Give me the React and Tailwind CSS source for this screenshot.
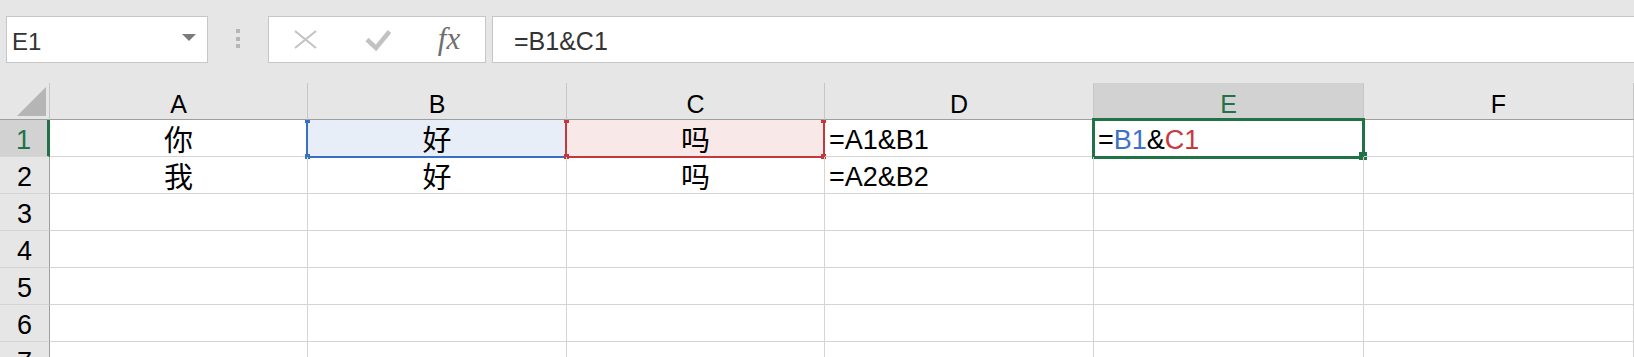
import React from 'react'

const GRID = 'grid grid-cols-[50px_258px_259px_258px_269px_270px_270px]'

const COLUMNS = ['A', 'B', 'C', 'D', 'E', 'F']

const ROWS = [
  ['我', '好', '吗', '=A2&B2', '', ''],
  ['', '', '', '', '', ''],
  ['', '', '', '', '', ''],
  ['', '', '', '', '', ''],
  ['', '', '', '', '', ''],
  ['', '', '', '', '', '']
]

function ColHead({ label, active }) {
  return (
    <div
      className={`h-[37px] flex items-end justify-center border-r border-b border-r-[#c6c6c6] border-b-[#9e9e9e] ${
        active ? 'bg-[#d2d2d2] text-[#217346]' : 'bg-[#e6e6e6] text-black'
      }`}
    >
      <span className="text-[25px] leading-[1.15]">{label}</span>
    </div>
  )
}

function RowHead({ n, active }) {
  return (
    <div
      className={`h-[37px] flex items-end justify-center border-b border-b-[#d4d4d4] ${
        active
          ? 'bg-[#d2d2d2] text-[#217346] border-r-[3px] border-r-[#217346]'
          : 'bg-[#e6e6e6] text-black border-r border-r-[#9e9e9e]'
      }`}
    >
      <span className="text-[27px] leading-[1.15]">{n}</span>
    </div>
  )
}

function Cell({ children, cjk, className = '', overlay }) {
  return (
    <div
      className={`relative h-[37px] flex items-end border-r border-b border-[#d4d4d4] ${
        cjk ? 'justify-center' : 'pl-[4px]'
      } ${className}`}
    >
      {children && (
        <span className={cjk ? 'text-[29px] leading-none' : 'text-[27px] leading-[1.15] whitespace-nowrap'}>
          {children}
        </span>
      )}
      {overlay}
    </div>
  )
}

const isCjk = (s) => /[\u4e00-\u9fff]/.test(s)

export default function App() {
  // range highlight for B1 (blue) and C1 (red)
  const blueRange = (
    <>
      <div className="absolute left-[-2px] top-0 bottom-[-2px] w-[2px] bg-[#3a6fc6]" />
      <div className="absolute left-[-2px] right-0 bottom-[-2px] h-[2px] bg-[#3a6fc6]" />
      <div className="absolute left-[-3px] top-0 w-[5px] h-[3px] bg-[#3a6fc6]" />
      <div className="absolute left-[-3px] bottom-[-3px] w-[5px] h-[5px] bg-[#3a6fc6]" />
    </>
  )

  const redRange = (
    <>
      <div className="absolute left-[-2px] top-0 bottom-[-2px] w-[2px] bg-[#c4383d]" />
      <div className="absolute right-[-1px] top-0 bottom-[-2px] w-[2px] bg-[#c4383d]" />
      <div className="absolute left-[-2px] right-[-1px] bottom-[-2px] h-[2px] bg-[#c4383d]" />
      <div className="absolute left-[-3px] top-0 w-[5px] h-[3px] bg-[#c4383d]" />
      <div className="absolute right-[-2px] top-0 w-[5px] h-[3px] bg-[#c4383d]" />
      <div className="absolute left-[-3px] bottom-[-3px] w-[5px] h-[5px] bg-[#c4383d]" />
      <div className="absolute right-[-2px] bottom-[-3px] w-[5px] h-[5px] bg-[#c4383d]" />
    </>
  )

  const activeCell = (
    <>
      <div className="absolute left-[-2px] top-[-2px] right-[-2px] bottom-[-3px] border-[3px] border-[#217346]" />
      <div className="absolute right-[-4px] bottom-[-4px] w-[8px] h-[8px] bg-[#217346]" />
    </>
  )

  return (
    <div className="w-[1634px] h-[357px] overflow-hidden bg-white font-['Liberation_Sans','Noto_Sans_CJK_SC',sans-serif]">

      {/* Name box + formula bar */}
      <div className="h-[83px] bg-[#e6e6e6] pt-[16px] flex items-start">
        <div className="ml-[6px] w-[202px] h-[47px] bg-white border border-[#c6c6c6] flex items-center justify-between pl-[5px] pr-[11px]">
          <span className="pt-[4px] text-[24px] leading-[1.15] text-[#333]">E1</span>
          <svg width="14" height="7" viewBox="0 0 14 7" className="mb-[4px]">
            <polygon points="0,0 14,0 7,7" fill="#7b7b7b" />
          </svg>
        </div>

        <div className="ml-[28px] mt-[13px] flex flex-col gap-[3.5px]">
          <span className="w-[4px] h-[4px] bg-[#b6b6b6]" />
          <span className="w-[4px] h-[4px] bg-[#b6b6b6]" />
          <span className="w-[4px] h-[4px] bg-[#b6b6b6]" />
        </div>

        <div className="ml-[28px] w-[218px] h-[47px] bg-white border border-[#c6c6c6] grid grid-cols-3 items-center justify-items-center">
          <svg width="23" height="19" viewBox="0 0 23 19">
            <path d="M1 1 L22 18 M22 1 L1 18" stroke="#c4c4c4" strokeWidth="2.2" fill="none" />
          </svg>
          <svg width="26" height="22" viewBox="0 0 26 22" className="ml-[2px]">
            <path d="M2 10.5 L11 19 L24.5 2.5" stroke="#c2c2c2" strokeWidth="4.5" fill="none" />
          </svg>
          <span className="font-['Liberation_Serif',serif] italic text-[31px] leading-none text-[#6f6f6f] pb-[2px]">
            fx
          </span>
        </div>

        <div className="ml-[6px] flex-1 h-[47px] bg-white border border-r-0 border-[#c6c6c6] flex items-center pl-[21px]">
          <span className="pt-[4px] text-[25px] leading-[1.15] text-[#333]">=B1&amp;C1</span>
        </div>
      </div>

      {/* Column headers */}
      <div className={GRID}>
        <div className="h-[37px] flex items-end justify-end pr-[3px] pb-[3px] bg-[#e6e6e6] border-r border-b border-r-[#c6c6c6] border-b-[#9e9e9e]">
          <svg width="29" height="29" viewBox="0 0 29 29">
            <polygon points="29,0 29,29 0,29" fill="#b5b5b5" />
          </svg>
        </div>
        {COLUMNS.map(c => (
          <ColHead key={c} label={c} active={c === 'E'} />
        ))}
      </div>

      {/* Row 1 */}
      <div className={GRID}>
        <RowHead n={1} active />
        <Cell cjk>你</Cell>
        <Cell cjk className="bg-[#e8eef8]" overlay={blueRange}>好</Cell>
        <Cell cjk className="bg-[#f9e8e8]" overlay={redRange}>吗</Cell>
        <Cell>=A1&amp;B1</Cell>
        <Cell overlay={activeCell}>
          <span className="text-black">=</span>
          <span className="text-[#3c72c7]">B1</span>
          <span className="text-black">&amp;</span>
          <span className="text-[#c8383c]">C1</span>
        </Cell>
        <Cell />
      </div>

      {/* Rows 2+ */}
      {ROWS.map((row, i) => (
        <div key={i} className={GRID}>
          <RowHead n={i + 2} />
          {row.map((v, j) => (
            <Cell key={j} cjk={isCjk(v)}>{v}</Cell>
          ))}
        </div>
      ))}
    </div>
  )
}
